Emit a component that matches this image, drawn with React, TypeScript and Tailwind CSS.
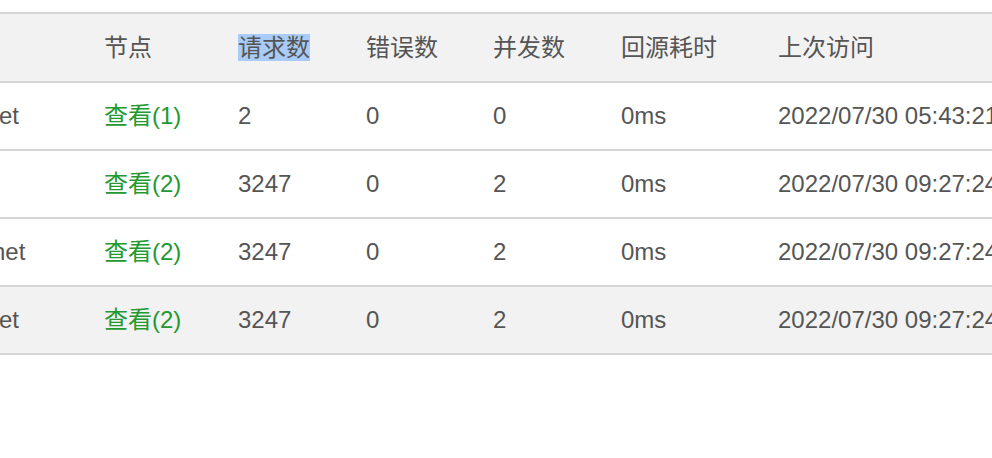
import React from "react";

const rows = [
  { host: "et", shift: "-ml-[1px]", node: "查看(1)", req: "2", err: "0", con: "0", t: "0ms", last: "2022/07/30 05:43:21", bg: "bg-white" },
  { host: "", shift: "", node: "查看(2)", req: "3247", err: "0", con: "2", t: "0ms", last: "2022/07/30 09:27:24", bg: "bg-white" },
  { host: "net", shift: "-ml-[8px]", node: "查看(2)", req: "3247", err: "0", con: "2", t: "0ms", last: "2022/07/30 09:27:24", bg: "bg-white" },
  { host: "et", shift: "-ml-[1px]", node: "查看(2)", req: "3247", err: "0", con: "2", t: "0ms", last: "2022/07/30 09:27:24", bg: "bg-[#f2f2f2]" },
];

const grid = "grid grid-cols-[104px_134px_128px_127px_128px_157px_1fr] items-center whitespace-nowrap";

export default function App() {
  return (
    <div
      className="w-[992px] h-[458px] overflow-hidden bg-white text-[24px] text-[#555555]"
      style={{ fontFamily: '"Liberation Sans", "Noto Sans CJK SC", sans-serif' }}
    >
      <div className="mt-[12px] border-t-2 border-[#d6d6d6]">
        <div className={`${grid} h-[69px] bg-[#f2f2f2] border-b-2 border-[#d6d6d6]`}>
          <div></div>
          <div>节点</div>
          <div>
            <span className="bg-[#a8cbf7]">请求数</span>
          </div>
          <div>错误数</div>
          <div>并发数</div>
          <div>回源耗时</div>
          <div>上次访问</div>
        </div>
        {rows.map((r, i) => (
          <div key={i} className={`${grid} h-[68px] ${r.bg} border-b-2 border-[#d6d6d6]`}>
            <div className={r.shift}>{r.host}</div>
            <div className="text-[#23992f]">{r.node}</div>
            <div>{r.req}</div>
            <div>{r.err}</div>
            <div>{r.con}</div>
            <div>{r.t}</div>
            <div>{r.last}</div>
          </div>
        ))}
      </div>
    </div>
  );
}
